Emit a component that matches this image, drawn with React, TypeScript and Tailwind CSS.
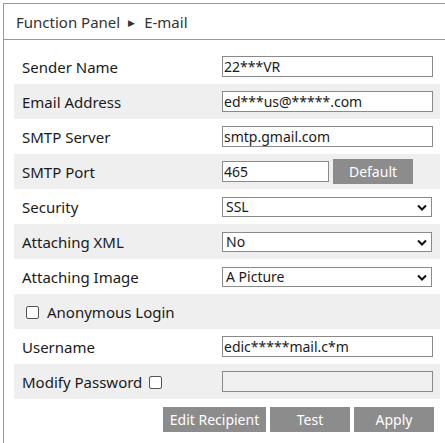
const font = { fontFamily: '"Noto Sans", "Liberation Sans", sans-serif' };

const TextBox = ({ value, width = "w-[211px]", disabled = false }: { value: string; width?: string; disabled?: boolean }) => (
  <div
    className={`${width} h-[21px] border border-[#8a8a8a] ${disabled ? "bg-[#f0f0f0]" : "bg-white"} flex items-center pl-px pt-px text-[14px] text-[#1a1a1a] leading-none`}
  >
    {value}
  </div>
);

const Select = ({ value }: { value: string }) => (
  <div className="w-[210px] h-[20px] border border-[#8a8a8a] bg-white flex items-center justify-between pl-[3px] pr-[4px] pt-px text-[14px] text-[#1a1a1a] leading-none">
    <span>{value}</span>
    <svg width="10" height="7" viewBox="0 0 10 7">
      <path d="M1 1.5 L5 5.5 L9 1.5" fill="none" stroke="#111" strokeWidth="2" />
    </svg>
  </div>
);

const Check = () => <span className="inline-block w-[13px] h-[13px] border border-[#555] rounded-[2px] bg-white" />;

const GrayButton = ({ label, width }: { label: string; width: string }) => (
  <div className={`${width} h-[25px] bg-[#8c8c8c] text-white text-[14px] flex items-center justify-center pt-px leading-none`}>
    {label}
  </div>
);

const Row = ({ gray, children }: { gray?: boolean; children: React.ReactNode }) => (
  <div className={`h-[35px] flex items-center pl-[8px] ${gray ? "bg-[#efefef]" : ""}`}>{children}</div>
);

const Label = ({ children }: { children: React.ReactNode }) => (
  <div className="w-[200px] pt-[2px] text-[15px] text-[#1a1a1a]">{children}</div>
);

export default function App() {
  return (
    <div className="w-[445px] h-[443px] bg-white overflow-hidden" style={font}>
      <div className="mt-[3px] ml-[3px] h-[440px] border-l border-t border-[#999]">
        <div className="h-[36px] border-b border-[#999] flex items-center pl-[12px] pt-[2px] text-[15px] text-[#333]">
          Function Panel <span className="ml-[8px] mr-[9px] text-[9px]">▶</span> E-mail
        </div>
        <div className="ml-[10px] w-[426px] pt-[9px]">
          <Row>
            <Label>Sender Name</Label>
            <TextBox value="22***VR" />
          </Row>
          <Row gray>
            <Label>Email Address</Label>
            <TextBox value="ed***us@*****.com" />
          </Row>
          <Row>
            <Label>SMTP Server</Label>
            <TextBox value="smtp.gmail.com" />
          </Row>
          <Row gray>
            <Label>SMTP Port</Label>
            <TextBox value="465" width="w-[107px]" />
            <div className="ml-[4px]">
              <GrayButton label="Default" width="w-[80px]" />
            </div>
          </Row>
          <Row>
            <Label>Security</Label>
            <Select value="SSL" />
          </Row>
          <Row gray>
            <Label>Attaching XML</Label>
            <Select value="No" />
          </Row>
          <Row>
            <Label>Attaching Image</Label>
            <Select value="A Picture" />
          </Row>
          <Row gray>
            <div className="flex items-center gap-[8px] pl-[4px] pt-[2px] text-[15px] text-[#1a1a1a]">
              <Check />
              Anonymous Login
            </div>
          </Row>
          <Row>
            <Label>Username</Label>
            <TextBox value="edic*****mail.c*m" />
          </Row>
          <Row gray>
            <div className="w-[200px] flex items-center gap-[7px] pt-[2px] text-[15px] text-[#1a1a1a]">
              Modify Password
              <Check />
            </div>
            <TextBox value="" disabled />
          </Row>
          <div className="flex justify-end gap-[4px] mt-[8px] pr-[6px]">
            <GrayButton label="Edit Recipient" width="w-[103px]" />
            <GrayButton label="Test" width="w-[80px]" />
            <GrayButton label="Apply" width="w-[80px]" />
          </div>
        </div>
      </div>
    </div>
  );
}
